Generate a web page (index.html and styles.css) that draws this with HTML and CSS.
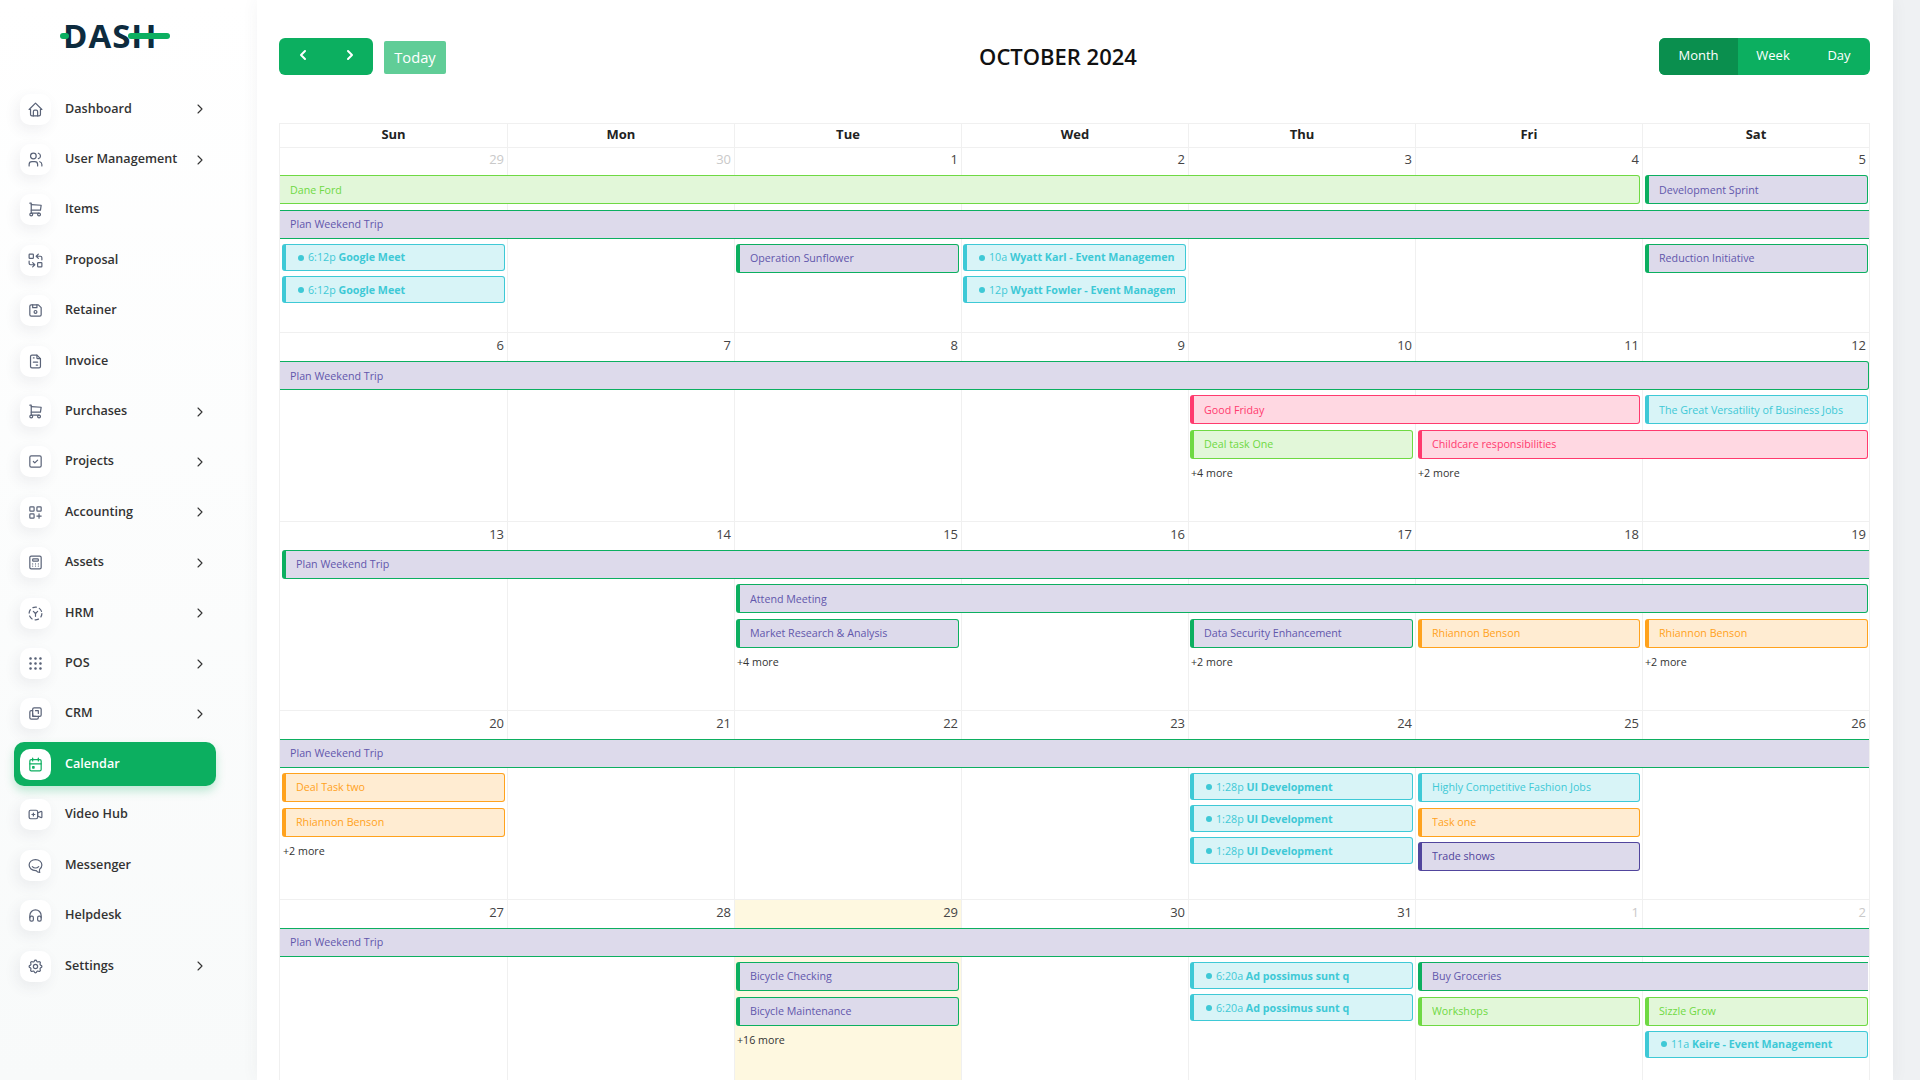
FILE: index.html
```html
<!DOCTYPE html>
<html lang="en">
<head>
  <meta charset="UTF-8">
  <title>Calendar</title>
  <link rel="stylesheet" href="styles.css">
</head>
<body>

<svg class="sprite" xmlns="http://www.w3.org/2000/svg">
  <symbol id="i-home" viewBox="0 0 24 24"><path d="M5 12H3l9-9 9 9h-2"/><path d="M5 12v7a2 2 0 0 0 2 2h10a2 2 0 0 0 2-2v-7"/><path d="M9 21v-6a2 2 0 0 1 2-2h2a2 2 0 0 1 2 2v6"/></symbol>
  <symbol id="i-users" viewBox="0 0 24 24"><circle cx="9" cy="7" r="4"/><path d="M3 21v-2a4 4 0 0 1 4-4h4a4 4 0 0 1 4 4v2"/><path d="M16 3.13a4 4 0 0 1 0 7.75"/><path d="M21 21v-2a4 4 0 0 0-3-3.85"/></symbol>
  <symbol id="i-cart" viewBox="0 0 24 24"><circle cx="6" cy="19" r="2"/><circle cx="17" cy="19" r="2"/><path d="M17 17H6V3H4"/><path d="M6 5l14 1-1 7H6"/></symbol>
  <symbol id="i-replace" viewBox="0 0 24 24"><rect x="3" y="3" width="6" height="6" rx="1"/><rect x="15" y="15" width="6" height="6" rx="1"/><path d="M21 11V8a2 2 0 0 0-2-2h-6l3 3m0-6l-3 3"/><path d="M3 13v3a2 2 0 0 0 2 2h6l-3-3m0 6l3-3"/></symbol>
  <symbol id="i-floppy" viewBox="0 0 24 24"><path d="M6 4h10l4 4v10a2 2 0 0 1-2 2H6a2 2 0 0 1-2-2V6a2 2 0 0 1 2-2"/><circle cx="12" cy="14" r="2"/><path d="M14 4v4H8V4"/></symbol>
  <symbol id="i-invoice" viewBox="0 0 24 24"><path d="M14 3v4a1 1 0 0 0 1 1h4"/><path d="M17 21H7a2 2 0 0 1-2-2V5a2 2 0 0 1 2-2h7l5 5v11a2 2 0 0 1-2 2z"/><path d="M9 7h1"/><path d="M9 13h6"/><path d="M13 17h2"/></symbol>
  <symbol id="i-check" viewBox="0 0 24 24"><rect x="4" y="4" width="16" height="16" rx="2"/><path d="M9 12l2 2 4-4"/></symbol>
  <symbol id="i-apps" viewBox="0 0 24 24"><rect x="4" y="4" width="6" height="6" rx="1"/><rect x="4" y="14" width="6" height="6" rx="1"/><rect x="14" y="4" width="6" height="6" rx="1"/><path d="M14 17h6"/><path d="M17 14v6"/></symbol>
  <symbol id="i-calc" viewBox="0 0 24 24"><rect x="4" y="3" width="16" height="18" rx="2"/><rect x="8" y="7" width="8" height="3" rx="1"/><path d="M8 14v.01M12 14v.01M16 14v.01M8 17v.01M12 17v.01M16 17v.01"/></symbol>
  <symbol id="i-hrm" viewBox="0 0 24 24"><circle cx="12" cy="12" r="9" stroke-dasharray="5 4.4"/><path d="M9 9l3 3 3-3"/><path d="M12 12v4"/></symbol>
  <symbol id="i-dots" viewBox="0 0 24 24"><g class="dots"><circle cx="5" cy="5" r="1"/><circle cx="12" cy="5" r="1"/><circle cx="19" cy="5" r="1"/><circle cx="5" cy="12" r="1"/><circle cx="12" cy="12" r="1"/><circle cx="19" cy="12" r="1"/><circle cx="5" cy="19" r="1"/><circle cx="12" cy="19" r="1"/><circle cx="19" cy="19" r="1"/></g></symbol>
  <symbol id="i-crm" viewBox="0 0 24 24"><rect x="8" y="4" width="12" height="12" rx="2"/><path d="M16 16v2a2 2 0 0 1-2 2H6a2 2 0 0 1-2-2v-8a2 2 0 0 1 2-2h2"/><path d="M12 8h4v4"/><path d="M8 12v4h4"/></symbol>
  <symbol id="i-calendar" viewBox="0 0 24 24"><path d="M4 7a2 2 0 0 1 2-2h12a2 2 0 0 1 2 2v12a2 2 0 0 1-2 2H6a2 2 0 0 1-2-2V7"/><path d="M16 3v4"/><path d="M8 3v4"/><path d="M4 11h16"/><rect x="8" y="15" width="2" height="2"/></symbol>
  <symbol id="i-video" viewBox="0 0 24 24"><path d="M15 10l4.553-2.276A1 1 0 0 1 21 8.618v6.764a1 1 0 0 1-1.447.894L15 14v-4z"/><rect x="3" y="6" width="12" height="12" rx="2"/><path d="M9 10v4"/><path d="M7 12h4"/></symbol>
  <symbol id="i-chat" viewBox="0 0 24 24"><path d="M17.8 17.3c2-1.4 3.2-3.600 3.200-5.900 0-4.300-4-7.800-9-7.800s-9 3.500-9 7.800 4 7.800 9 7.800h1c1 1.600 2.500 2.600 5 2.600-.5-.9-.6-2.400-.2-4.500z"/><path d="M7.500 13.500c2.500 2.500 6.500 2.500 9 0"/></symbol>
  <symbol id="i-headphones" viewBox="0 0 24 24"><rect x="4" y="13" width="5" height="7" rx="2"/><rect x="15" y="13" width="5" height="7" rx="2"/><path d="M4 15v-3a8 8 0 0 1 16 0v3"/></symbol>
  <symbol id="i-settings" viewBox="0 0 24 24"><path d="M10.325 4.317c.426-1.756 2.924-1.756 3.350 0a1.724 1.724 0 0 0 2.573 1.066c1.543-.94 3.310.826 2.370 2.370a1.724 1.724 0 0 0 1.065 2.572c1.756.426 1.756 2.924 0 3.350a1.724 1.724 0 0 0-1.066 2.573c.94 1.543-.826 3.310-2.370 2.370a1.724 1.724 0 0 0-2.572 1.065c-.426 1.756-2.924 1.756-3.350 0a1.724 1.724 0 0 0-2.573-1.066c-1.543.94-3.310-.826-2.370-2.370a1.724 1.724 0 0 0-1.065-2.572c-1.756-.426-1.756-2.924 0-3.350a1.724 1.724 0 0 0 1.066-2.573c-.94-1.543.826-3.310 2.370-2.370.996.608 2.296.07 2.572-1.065z"/><circle cx="12" cy="12" r="3"/></symbol>
  <symbol id="i-chevron" viewBox="0 0 24 24"><path d="M9 6l6 6-6 6"/></symbol>
</svg>

<div class="layout">
  <aside class="sidebar">
    <div class="logo"><span class="logo-text">DASH</span></div>
    <nav class="nav">
      <a class="nav-item"><span class="chip"><svg class="icon"><use href="#i-home"/></svg></span><span class="nav-label">Dashboard</span><svg class="chevron"><use href="#i-chevron"/></svg></a>
      <a class="nav-item"><span class="chip"><svg class="icon"><use href="#i-users"/></svg></span><span class="nav-label">User Management</span><svg class="chevron"><use href="#i-chevron"/></svg></a>
      <a class="nav-item"><span class="chip"><svg class="icon"><use href="#i-cart"/></svg></span><span class="nav-label">Items</span></a>
      <a class="nav-item"><span class="chip"><svg class="icon"><use href="#i-replace"/></svg></span><span class="nav-label">Proposal</span></a>
      <a class="nav-item"><span class="chip"><svg class="icon"><use href="#i-floppy"/></svg></span><span class="nav-label">Retainer</span></a>
      <a class="nav-item"><span class="chip"><svg class="icon"><use href="#i-invoice"/></svg></span><span class="nav-label">Invoice</span></a>
      <a class="nav-item"><span class="chip"><svg class="icon"><use href="#i-cart"/></svg></span><span class="nav-label">Purchases</span><svg class="chevron"><use href="#i-chevron"/></svg></a>
      <a class="nav-item"><span class="chip"><svg class="icon"><use href="#i-check"/></svg></span><span class="nav-label">Projects</span><svg class="chevron"><use href="#i-chevron"/></svg></a>
      <a class="nav-item"><span class="chip"><svg class="icon"><use href="#i-apps"/></svg></span><span class="nav-label">Accounting</span><svg class="chevron"><use href="#i-chevron"/></svg></a>
      <a class="nav-item"><span class="chip"><svg class="icon"><use href="#i-calc"/></svg></span><span class="nav-label">Assets</span><svg class="chevron"><use href="#i-chevron"/></svg></a>
      <a class="nav-item"><span class="chip"><svg class="icon"><use href="#i-hrm"/></svg></span><span class="nav-label">HRM</span><svg class="chevron"><use href="#i-chevron"/></svg></a>
      <a class="nav-item"><span class="chip"><svg class="icon"><use href="#i-dots"/></svg></span><span class="nav-label">POS</span><svg class="chevron"><use href="#i-chevron"/></svg></a>
      <a class="nav-item"><span class="chip"><svg class="icon"><use href="#i-crm"/></svg></span><span class="nav-label">CRM</span><svg class="chevron"><use href="#i-chevron"/></svg></a>
      <a class="nav-item active"><span class="chip"><svg class="icon"><use href="#i-calendar"/></svg></span><span class="nav-label">Calendar</span></a>
      <a class="nav-item"><span class="chip"><svg class="icon"><use href="#i-video"/></svg></span><span class="nav-label">Video Hub</span></a>
      <a class="nav-item"><span class="chip"><svg class="icon"><use href="#i-chat"/></svg></span><span class="nav-label">Messenger</span></a>
      <a class="nav-item"><span class="chip"><svg class="icon"><use href="#i-headphones"/></svg></span><span class="nav-label">Helpdesk</span></a>
      <a class="nav-item"><span class="chip"><svg class="icon"><use href="#i-settings"/></svg></span><span class="nav-label">Settings</span><svg class="chevron"><use href="#i-chevron"/></svg></a>
    </nav>
  </aside>

  <main class="card">
    <div class="toolbar">
      <div class="toolbar-left">
        <div class="btn-group arrows">
          <button class="btn"><svg class="arrow"><use href="#i-chevron"/></svg></button>
          <button class="btn"><svg class="arrow"><use href="#i-chevron"/></svg></button>
        </div>
        <button class="today">Today</button>
      </div>
      <h2 class="title">OCTOBER 2024</h2>
      <div class="btn-group views">
        <button class="btn selected">Month</button>
        <button class="btn">Week</button>
        <button class="btn">Day</button>
      </div>
    </div>

    <div class="calendar">
      <div class="head-row">
        <div>Sun</div><div>Mon</div><div>Tue</div><div>Wed</div><div>Thu</div><div>Fri</div><div>Sat</div>
      </div>

      <!-- semana 1 -->
      <div class="week week-first">
        <div class="day c1 other">29</div><div class="day c2 other">30</div><div class="day c3">1</div><div class="day c4">2</div><div class="day c5">3</div><div class="day c6">4</div><div class="day c7">5</div>

        <div class="ev low green cont-left c1 s6 r2"><span class="ev-label">Dane Ford</span></div>
        <div class="ev low purple c7 r2"><span class="ev-label">Development Sprint</span></div>
        <div class="ev purple cont-left cont-right c1 s7 r3"><span class="ev-label">Plan Weekend Trip</span></div>
        <div class="stack c1 r4">
          <div class="ev cyan timed"><i class="dot"></i><span class="ev-label">6:12p <b>Google Meet</b></span></div>
          <div class="ev cyan timed"><i class="dot"></i><span class="ev-label">6:12p <b>Google Meet</b></span></div>
        </div>
        <div class="ev purple c3 r4"><span class="ev-label">Operation Sunflower</span></div>
        <div class="stack c4 r4">
          <div class="ev cyan timed"><i class="dot"></i><span class="ev-label">10a <b>Wyatt Karl - Event Management</b></span></div>
          <div class="ev cyan timed"><i class="dot"></i><span class="ev-label">12p <b>Wyatt Fowler - Event Management</b></span></div>
        </div>
        <div class="ev purple c7 r4"><span class="ev-label">Reduction Initiative</span></div>
      </div>

      <!-- semana 2 -->
      <div class="week">
        <div class="day c1">6</div><div class="day c2">7</div><div class="day c3">8</div><div class="day c4">9</div><div class="day c5">10</div><div class="day c6">11</div><div class="day c7">12</div>

        <div class="ev low purple cont-left cont-end c1 s7 r2"><span class="ev-label">Plan Weekend Trip</span></div>
        <div class="ev low pink c5 s2 r3"><span class="ev-label">Good Friday</span></div>
        <div class="ev low cyan c7 r3"><span class="ev-label">The Great Versatility of Business Jobs</span></div>
        <div class="ev green c5 r4"><span class="ev-label">Deal task One</span></div>
        <div class="ev pink c6 s2 r4"><span class="ev-label">Childcare responsibilities</span></div>
        <a class="more c5 r5">+4 more</a>
        <a class="more c6 r5">+2 more</a>
      </div>

      <!-- semana 3 -->
      <div class="week">
        <div class="day c1">13</div><div class="day c2">14</div><div class="day c3">15</div><div class="day c4">16</div><div class="day c5">17</div><div class="day c6">18</div><div class="day c7">19</div>

        <div class="ev purple cont-right c1 s7 r2"><span class="ev-label">Plan Weekend Trip</span></div>
        <div class="ev low purple c3 s5 r3"><span class="ev-label">Attend Meeting</span></div>
        <div class="ev purple c3 r4"><span class="ev-label">Market Research &amp; Analysis</span></div>
        <div class="ev purple c5 r4"><span class="ev-label">Data Security Enhancement</span></div>
        <div class="ev orange c6 r4"><span class="ev-label">Rhiannon Benson</span></div>
        <div class="ev orange c7 r4"><span class="ev-label">Rhiannon Benson</span></div>
        <a class="more c3 r5">+4 more</a>
        <a class="more c5 r5">+2 more</a>
        <a class="more c7 r5">+2 more</a>
      </div>

      <!-- semana 4 -->
      <div class="week">
        <div class="day c1">20</div><div class="day c2">21</div><div class="day c3">22</div><div class="day c4">23</div><div class="day c5">24</div><div class="day c6">25</div><div class="day c7">26</div>

        <div class="ev purple cont-left cont-right c1 s7 r2"><span class="ev-label">Plan Weekend Trip</span></div>
        <div class="ev orange c1 r3"><span class="ev-label">Deal Task two</span></div>
        <div class="ev orange c1 r4"><span class="ev-label">Rhiannon Benson</span></div>
        <a class="more c1 r5">+2 more</a>
        <div class="stack c5 r3">
          <div class="ev cyan timed"><i class="dot"></i><span class="ev-label">1:28p <b>UI Development</b></span></div>
          <div class="ev cyan timed"><i class="dot"></i><span class="ev-label">1:28p <b>UI Development</b></span></div>
          <div class="ev cyan timed"><i class="dot"></i><span class="ev-label">1:28p <b>UI Development</b></span></div>
        </div>
        <div class="ev cyan c6 r3"><span class="ev-label">Highly Competitive Fashion Jobs</span></div>
        <div class="ev orange c6 r4"><span class="ev-label">Task one</span></div>
        <div class="ev navy c6 r5"><span class="ev-label">Trade shows</span></div>
      </div>

      <!-- semana 5 -->
      <div class="week">
        <div class="day c1">27</div><div class="day c2">28</div><div class="day c3 today-cell">29</div><div class="day c4">30</div><div class="day c5">31</div><div class="day c6 other">1</div><div class="day c7 other">2</div>

        <div class="ev purple cont-left cont-right c1 s7 r2"><span class="ev-label">Plan Weekend Trip</span></div>
        <div class="ev purple c3 r3"><span class="ev-label">Bicycle Checking</span></div>
        <div class="ev purple c3 r4"><span class="ev-label">Bicycle Maintenance</span></div>
        <a class="more c3 r5">+16 more</a>
        <div class="stack c5 r3">
          <div class="ev cyan timed"><i class="dot"></i><span class="ev-label">6:20a <b>Ad possimus sunt q</b></span></div>
          <div class="ev cyan timed"><i class="dot"></i><span class="ev-label">6:20a <b>Ad possimus sunt q</b></span></div>
        </div>
        <div class="ev purple cont-right c6 s2 r3"><span class="ev-label">Buy Groceries</span></div>
        <div class="ev green c6 r4"><span class="ev-label">Workshops</span></div>
        <div class="ev green c7 r4"><span class="ev-label">Sizzle Grow</span></div>
        <div class="ev cyan timed c7 r5"><i class="dot"></i><span class="ev-label">11a <b>Keire - Event Management</b></span></div>
      </div>
    </div>
  </main>
</div>

</body>
</html>
```

FILE: styles.css
```css
* {
  box-sizing: border-box;
}
html, body {
  height: 100%;
}
body {
  margin: 0;
  overflow: hidden;
  background: #eff1f3;
  font-family: "Open Sans", "Noto Sans", sans-serif;
  font-size: 13px;
  color: #333;
}
.sprite {
  display: none;
}
.layout {
  display: flex;
  height: 100vh;
}

/* sidebar */
.sidebar {
  width: 257px;
  flex: none;
  background: linear-gradient(#fff, #f8fafa);
}
.logo {
  position: relative;
  height: 87.1px;
  padding: 14px 0 0 63px;
}
.logo-text {
  font-size: 33px;
  line-height: 44px;
  font-weight: 700;
  letter-spacing: 1px;
  color: #0d2b3e;
}
.logo::before {
  content: "";
  position: absolute;
  left: 60px;
  top: 33px;
  width: 9px;
  height: 6px;
  border-radius: 3px;
  background: #0caf60;
}
.logo::after {
  content: "";
  position: absolute;
  left: 128px;
  top: 33px;
  width: 42px;
  height: 6px;
  border-radius: 3px;
  background: #0caf60;
}
.nav {
  display: flex;
  flex-direction: column;
  gap: 6.41px;
  margin-left: 14px;
  width: 202px;
}
.nav-item {
  display: flex;
  align-items: center;
  height: 44px;
  padding: 0 8px 0 6px;
  border-radius: 10px;
  font-size: 12.6px;
  font-weight: 600;
  color: #333;
}
.nav-item.active {
  background: #0caf60;
  color: #fff;
  box-shadow: 0 5px 10px rgba(12, 175, 96, .25);
}
.chip {
  display: flex;
  align-items: center;
  justify-content: center;
  width: 31px;
  height: 31px;
  flex: none;
  margin-right: 14px;
  border-radius: 10px;
  background: #fff;
  box-shadow: -3px 5px 14px rgba(60, 70, 90, .08);
  color: #5a6378;
}
.active .chip {
  color: #0caf60;
  box-shadow: none;
}
.icon {
  width: 17px;
  height: 17px;
  fill: none;
  stroke: currentColor;
  stroke-width: 1.7;
  stroke-linecap: round;
  stroke-linejoin: round;
}
.dots {
  fill: currentColor;
}
.nav-label {
  flex: 1;
  padding-bottom: 2px;
  white-space: nowrap;
}
.chevron {
  width: 16px;
  height: 16px;
  flex: none;
  fill: none;
  stroke: #333;
  stroke-width: 1.6;
  stroke-linecap: round;
  stroke-linejoin: round;
}

/* content */
.card {
  width: 1636px;
  flex: none;
  padding: 38px 23px 0 22px;
  background: #fff;
  box-shadow: 0 0 16px rgba(60, 70, 90, .06);
  overflow: hidden;
}
.toolbar {
  display: flex;
  justify-content: space-between;
  align-items: center;
  height: 37px;
  margin-bottom: 48px;
}
.toolbar-left {
  display: flex;
  align-items: flex-start;
  height: 37px;
}
.btn-group {
  display: flex;
  height: 37px;
  border-radius: 6px;
  overflow: hidden;
  background: #0caf60;
}
.btn {
  display: flex;
  align-items: center;
  justify-content: center;
  padding: 0;
  border: 0;
  background: none;
  color: #fff;
  font: 500 13px "Open Sans", sans-serif;
}
.arrows {
  width: 94px;
}
.arrows .btn {
  flex: 1;
}
.arrow {
  width: 16px;
  height: 16px;
  margin-top: -3px;
  fill: none;
  stroke: #fff;
  stroke-width: 3;
  stroke-linecap: round;
  stroke-linejoin: round;
}
.arrows .btn:first-child .arrow {
  transform: rotate(180deg);
}
.today {
  width: 62px;
  height: 33px;
  margin: 3px 11px 0 11px;
  padding: 0 0 2px;
  border: 0;
  border-radius: 2px;
  background: #60cd97;
  color: #fff;
  font: 400 14.7px "Open Sans", sans-serif;
}
.title {
  margin: -2px 0 0;
  font-size: 22px;
  font-weight: 600;
  color: #111;
}
.views {
  width: 211px;
}
.views .btn {
  margin-top: -3px;
  height: 40px;
}
.views .btn:nth-child(1) { width: 79px; }
.views .btn:nth-child(2) { width: 70px; }
.views .btn:nth-child(3) { width: 62px; }
.views .btn.selected {
  background: #0a8f4e;
}

/* calendar */
.calendar {
  border-left: 1px solid #f0f0f0;
  border-right: 1px solid #f0f0f0;
}
.head-row {
  display: grid;
  grid-template-columns: repeat(7, 1fr);
  height: 24px;
  border-top: 1px solid #f0f0f0;
  font-weight: 700;
  color: #222;
  text-align: center;
  line-height: 20px;
}
.head-row div {
  border-left: 1px solid #f0f0f0;
}
.head-row div:first-child {
  border-left: 0;
}
.week {
  display: grid;
  grid-template-columns: repeat(7, 1fr);
  grid-template-rows: 29px 34px 34.5px 34px 1fr;
  height: 189px;
}
.week-first {
  grid-template-rows: 28px 35px 34px 32px 1fr;
  height: 185px;
}
.day {
  grid-row: 1 / -1;
  padding: 2px 3px 0 0;
  border-top: 1px solid #f0f0f0;
  border-left: 1px solid #f0f0f0;
  text-align: right;
  line-height: 20px;
  font-size: 13px;
  color: #444;
}
.day.c1 {
  border-left: 0;
}
.week-first .day {
  padding-top: 1px;
}
.day.other {
  color: #c9c9c9;
}
.today-cell {
  background: #fef8e0;
}

.c1 { grid-column-start: 1; }
.c2 { grid-column-start: 2; }
.c3 { grid-column-start: 3; }
.c4 { grid-column-start: 4; }
.c5 { grid-column-start: 5; }
.c6 { grid-column-start: 6; }
.c7 { grid-column-start: 7; }
.s2 { grid-column-end: span 2; }
.s5 { grid-column-end: span 5; }
.s6 { grid-column-end: span 6; }
.s7 { grid-column-end: span 7; }
.r2 { grid-row-start: 2; }
.r3 { grid-row-start: 3; }
.r4 { grid-row-start: 4; }
.r5 { grid-row-start: 5; }

.ev {
  display: flex;
  align-items: center;
  flex: none;
  height: 29px;
  min-width: 0;
  margin: 0 2px;
  padding: 0 10px 0 10px;
  border: 1px solid;
  border-left-width: 4px;
  border-radius: 3px;
  font-size: 10.7px;
  white-space: nowrap;
  overflow: hidden;
}
.ev.c6,
.ev.c7 {
  margin-left: 3px;
}
.ev.c7,
.ev.c6.s2,
.ev.s5 {
  margin-right: 1px;
}
.ev-label {
  flex: 1;
  min-width: 0;
  padding-bottom: 1px;
  overflow: hidden;
}
.low .ev-label,
.timed .ev-label {
  padding-bottom: 0;
}
.week-first .timed:first-child .ev-label {
  padding-bottom: 1px;
}
.stack {
  display: flex;
  flex-direction: column;
  gap: 5px;
  min-width: 0;
}
.purple { background: #dddaeb; border-color: #0caf60; color: #6257ab; }
.navy   { background: #dddaeb; border-color: #51459d; color: #51459d; }
.green  { background: #e2f7d9; border-color: #6fd943; color: #6fd943; }
.pink   { background: #ffd8e2; border-color: #ff3a6e; color: #ff3a6e; }
.orange { background: #ffecd2; border-color: #ffa21d; color: #ffa21d; }
.cyan   { background: #d8f4f7; border-color: #3ec9d6; color: #3ec9d6; }
.timed {
  height: 27px;
  padding-left: 12px;
}
.dot {
  width: 6px;
  height: 6px;
  flex: none;
  margin-right: 4px;
  border-radius: 50%;
  background: #3ec9d6;
}
.ev.cont-left {
  margin-left: 0;
  padding-left: 10px;
  border-left-width: 0;
  border-top-left-radius: 0;
  border-bottom-left-radius: 0;
}
.ev.cont-right {
  margin-right: 0;
  border-right-width: 0;
  border-top-right-radius: 0;
  border-bottom-right-radius: 0;
}
.ev.cont-end {
  margin-right: 0;
}
.more {
  margin-left: 3px;
  padding-top: 1px;
  font-size: 10.7px;
  line-height: 16px;
  color: #333;
}
```
